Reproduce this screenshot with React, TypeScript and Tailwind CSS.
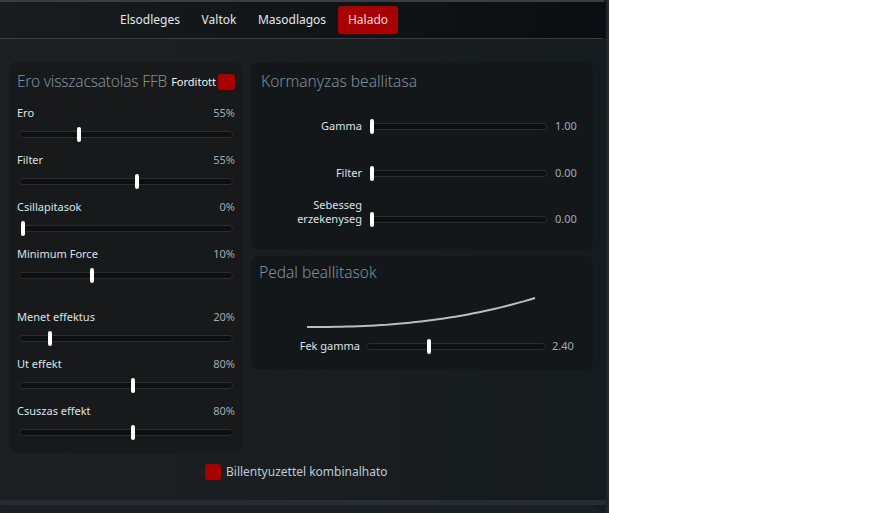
import React from "react";

const font = { fontFamily: '"Noto Sans", "Open Sans", sans-serif' };

type SliderProps = { pos: number; className?: string };

// thumb position is given in pixels from the left edge of the track
function Track({ pos, className = "" }: SliderProps) {
  return (
    <div className={`relative h-[14px] flex items-center ${className}`}>
      <div className="h-[7px] w-full rounded-full border border-[#2a2e30] bg-[#0d0f10]" />
      <div
        className="absolute top-0 h-[15px] w-[4px] rounded-full bg-white"
        style={{ left: pos }}
      />
    </div>
  );
}

type FfbRow = { label: string; value: string; pos: number; gap?: boolean };

const ffbRows: FfbRow[] = [
  { label: "Ero", value: "55%", pos: 58 },
  { label: "Filter", value: "55%", pos: 116 },
  { label: "Csillapitasok", value: "0%", pos: 2 },
  { label: "Minimum Force", value: "10%", pos: 71 },
  { label: "Menet effektus", value: "20%", pos: 29, gap: true },
  { label: "Ut effekt", value: "80%", pos: 112 },
  { label: "Csuszas effekt", value: "80%", pos: 112 },
];

function curvePoints() {
  const pts: string[] = [];
  for (let i = 0; i <= 40; i++) {
    const t = i / 40;
    pts.push(`${(1 + 228 * t).toFixed(1)},${(33 - 29 * Math.pow(t, 2.4)).toFixed(1)}`);
  }
  return pts.join(" ");
}

export default function App() {
  return (
    <div className="flex h-[513px] w-[888px] bg-white" style={font}>
      <div className="flex h-full w-[609px] flex-col border-r-[3px] border-[#1d262a] bg-gradient-to-r from-[#1d2022] to-[#161b1e]">
        <div className="h-[2px] w-[604px] bg-[#3b3d3e]" />
        <nav className="flex h-[36px] items-center bg-gradient-to-r from-[#181c1e] to-[#0b0e10] pl-[110px] text-[12px] text-[#e2e8ed]">
          <span className="w-[80px] text-center">Elsodleges</span>
          <span className="w-[58px] text-center">Valtok</span>
          <span className="w-[88px] text-center">Masodlagos</span>
          <span className="ml-[2px] flex h-[28px] w-[60px] items-center justify-center rounded-[3px] bg-[#a80000] text-[#f3dede]">
            Halado
          </span>
        </nav>
        <div className="h-px w-[602px] bg-[#3b3d3e]" />

        <div className="flex flex-1 flex-col">
          <div className="flex gap-[8px] pl-[9px] pt-[23px]">
            {/* FFB panel */}
            <section className="h-[391px] w-[234px] rounded-lg bg-[#17191b] px-[8px] pt-[8px]">
              <div className="flex h-[24px] items-center justify-between">
                <h2 className="text-[15.5px] font-light tracking-[-0.2px] text-[#7e8f9c]">Ero visszacsatolas FFB</h2>
                <label className="flex items-center gap-[2px] text-[11px] font-normal text-[#f4f4f4]">
                  Forditott
                  <span className="h-[16px] w-[17px] rounded-[3px] bg-[#a80000]" />
                </label>
              </div>
              <div className="mt-[11px]">
                {ffbRows.map((r) => (
                  <div key={r.label} className={`h-[47px] ${r.gap ? "mt-[16px]" : ""}`}>
                    <div className="flex h-[16px] items-center justify-between text-[11px]">
                      <span className="text-[#dbe2e7]">{r.label}</span>
                      <span className="text-[#a2aab0]">{r.value}</span>
                    </div>
                    <Track pos={r.pos} className="mx-[2px] mt-[6px]" />
                  </div>
                ))}
              </div>
            </section>

            <div className="flex w-[342px] flex-col gap-[6px]">
              {/* steering panel */}
              <section className="h-[188px] rounded-lg bg-[#131719] pl-[10px] pt-[8px]">
                <h2 className="flex h-[24px] items-center text-[15.5px] font-light text-[#7e8f9c]">
                  Kormanyzas beallitasa
                </h2>
                <div className="text-[11px] leading-[14px]">
                  <div className="mt-[25px] flex items-end">
                    <span className="w-[101px] text-right text-[#dbe2e7]">Gamma</span>
                    <Track pos={0} className="ml-[8px] w-[177px]" />
                    <span className="ml-[8px] text-[#a2aab0]">1.00</span>
                  </div>
                  <div className="mt-[33px] flex items-end">
                    <span className="w-[101px] text-right text-[#dbe2e7]">Filter</span>
                    <Track pos={0} className="ml-[8px] w-[177px]" />
                    <span className="ml-[8px] text-[#a2aab0]">0.00</span>
                  </div>
                  <div className="mt-[18px] flex items-end">
                    <span className="w-[101px] text-right text-[#dbe2e7]">
                      Sebesseg
                      <br />
                      erzekenyseg
                    </span>
                    <Track pos={0} className="ml-[8px] w-[177px]" />
                    <span className="ml-[8px] text-[#a2aab0]">0.00</span>
                  </div>
                </div>
              </section>

              {/* pedal panel */}
              <section className="h-[114px] rounded-lg bg-[#131719] pl-[8px] pt-[5px]">
                <h2 className="flex h-[24px] items-center text-[15.5px] font-light text-[#7e8f9c]">
                  Pedal beallitasok
                </h2>
                <svg width="232" height="36" className="ml-[47px] mt-[9px] block">
                  <polyline points={curvePoints()} fill="none" stroke="#bdbdbd" strokeWidth="2" />
                </svg>
                <div className="mt-[9px] flex items-end text-[11px] leading-[14px]">
                  <span className="w-[101px] text-right text-[#dbe2e7]">Fek gamma</span>
                  <Track pos={61} className="ml-[6px] w-[180px]" />
                  <span className="ml-[6px] text-[#a2aab0]">2.40</span>
                </div>
              </section>
            </div>
          </div>

          <label className="ml-[205px] mt-[10px] flex items-center gap-[5px] text-[12px] text-[#bfcad4]">
            <span className="h-[16px] w-[16px] rounded-[3px] bg-[#a80000]" />
            Billentyuzettel kombinalhato
          </label>
        </div>

        <div className="h-[5px] bg-[#262c2f]" />
        <div className="ml-[8px] mr-[6px] h-[8px] rounded-t-lg bg-[#1a1f22]" />
      </div>
    </div>
  );
}
